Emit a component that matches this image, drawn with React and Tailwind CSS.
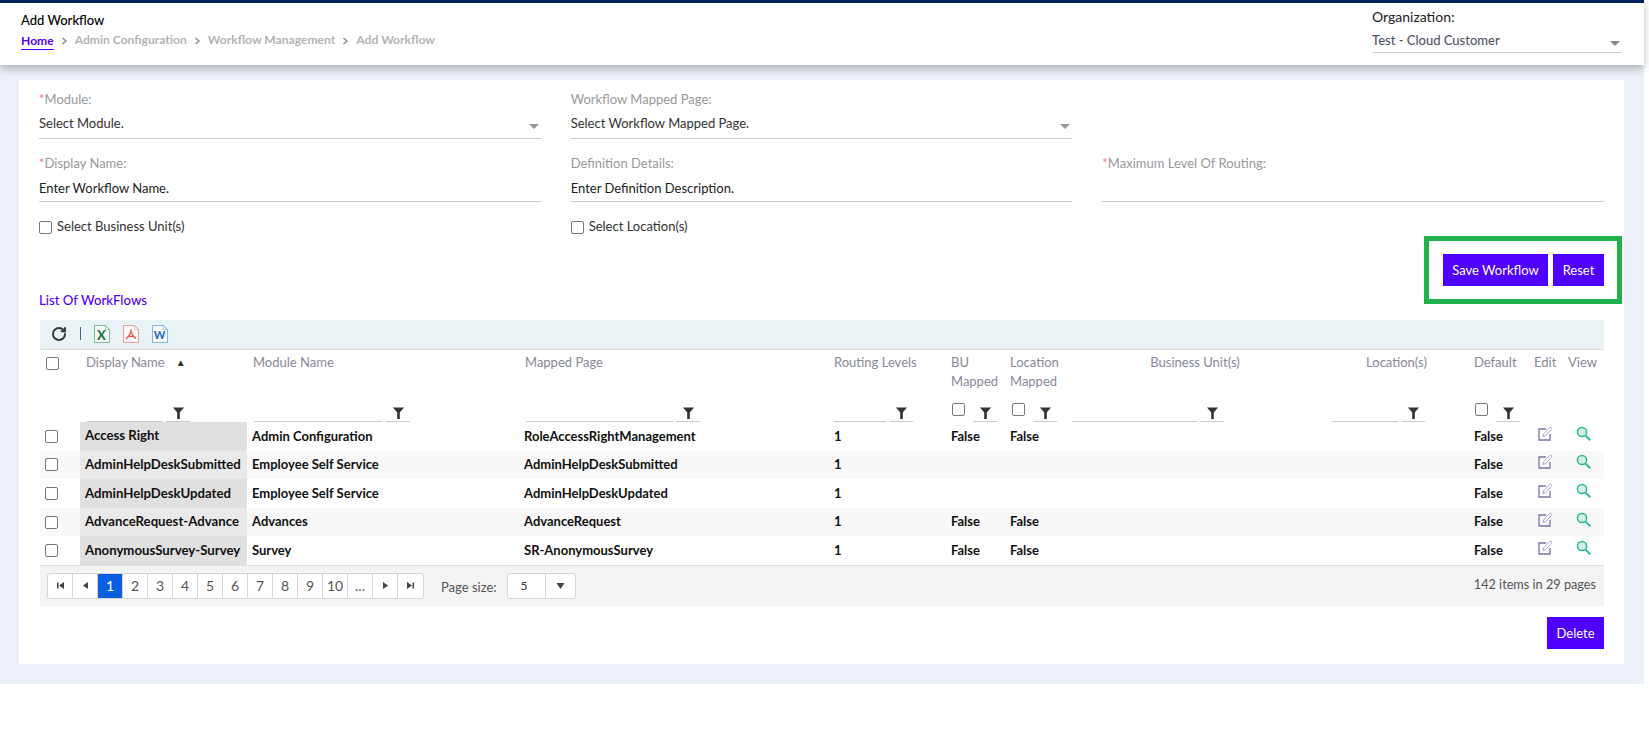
import { RotateCw } from "lucide-react";

const lato = "font-['Lato',sans-serif]";

const rows = [
  { name: "Access Right", mod: "Admin Configuration", page: "RoleAccessRightManagement", bu: "False", loc: "False" },
  { name: "AdminHelpDeskSubmitted", mod: "Employee Self Service", page: "AdminHelpDeskSubmitted", bu: "", loc: "" },
  { name: "AdminHelpDeskUpdated", mod: "Employee Self Service", page: "AdminHelpDeskUpdated", bu: "", loc: "" },
  { name: "AdvanceRequest-Advance", mod: "Advances", page: "AdvanceRequest", bu: "False", loc: "False" },
  { name: "AnonymousSurvey-Survey", mod: "Survey", page: "SR-AnonymousSurvey", bu: "False", loc: "False" },
];

const pages = ["1", "2", "3", "4", "5", "6", "7", "8", "9", "10", "..."];

function Caret() {
  return <span className="w-0 h-0 border-x-[5px] border-x-transparent border-t-[5px] border-t-[#999999] self-end mb-[5px] mr-[2px]"></span>;
}

function Box({ className = "" }) {
  return <span className={"block w-[13px] h-[13px] rounded-[2px] border border-[#767676] bg-white " + className}></span>;
}

function Chevron() {
  return (
    <svg width="7" height="8" viewBox="0 0 7 8" fill="none" className="mx-[7px] mt-[2px]">
      <path d="M1.5 1l3.5 3-3.5 3" stroke="#8f8f8f" strokeWidth="1.5" />
    </svg>
  );
}

function Funnel() {
  return (
    <svg width="11" height="12" viewBox="0 0 11 12">
      <path d="M0 .5h11L6.8 5.5v6.5H4.2V5.5z" fill="#333333" />
    </svg>
  );
}

function FilterBtn() {
  return (
    <div className="w-[24px] h-full border-b border-[#cccccc] flex justify-center items-end pb-[2px]">
      <Funnel />
    </div>
  );
}

// input underline + funnel button used in the header filter row
function Filter({ w }) {
  return (
    <div className="flex items-end gap-[3px] h-[21px]">
      <div className="h-full border-b border-[#cccccc]" style={{ width: w }}></div>
      <FilterBtn />
    </div>
  );
}

function CheckFilter({ gap }) {
  return (
    <div className="flex items-end h-[21px]">
      <Box className="mb-[6px]" />
      <div style={{ width: gap }}></div>
      <FilterBtn />
    </div>
  );
}

function EditIcon() {
  return (
    <svg width="15" height="15" viewBox="0 0 15 15" fill="none" className="block">
      <path d="M8 3H1v11h11V8" stroke="#7574ab" strokeWidth="1.3" />
      <path d="M5 10.5l.8-2.8L11.6 1.6c.5-.5 1.3-.5 1.8 0s.5 1.3 0 1.8L7.6 9.6z" stroke="#a5a4c9" fill="white" />
    </svg>
  );
}

function ViewIcon() {
  return (
    <svg width="15" height="15" viewBox="0 0 15 15" fill="none" className="block">
      <circle cx="6" cy="6" r="4.6" stroke="#2bb893" strokeWidth="1.5" fill="#d5efe6" />
      <path d="M9.6 9.6l4.6 4.6" stroke="#2bb893" strokeWidth="2" />
    </svg>
  );
}

function FileIcon({ color, children }) {
  return (
    <svg width="16" height="18" viewBox="0 0 16 18" fill="none">
      <path d="M.5.5h11l4 4v13H.5z" stroke={color} strokeOpacity="0.55" fill="#f7fafb" />
      <path d="M11.5.5v4h4" stroke={color} strokeOpacity="0.35" />
      {children}
    </svg>
  );
}

function PagerBtn({ children, active }) {
  return (
    <div className={"w-[25px] h-full flex items-center justify-center border-r border-[#d5d5d5] last:border-r-0 text-[14px] " + (active ? "bg-[#0b5ee0] text-white" : "text-[#555555]")}>
      {children}
    </div>
  );
}

function Tri({ d }) {
  return (
    <svg width="9" height="9" viewBox="0 0 9 9">
      <path d={d} fill="#444444" />
    </svg>
  );
}

export default function App() {
  return (
    <div className={"w-full h-[745px] bg-white overflow-hidden text-[13px] " + lato}>
      <div className="w-[1644px]">
        <div className="relative z-10 h-[65px] bg-white border-t-[3px] border-[#00205b] shadow-[0_4px_8px_rgba(0,0,0,0.25)] flex justify-between pl-[21px] pr-[22px]">
          <div>
            <div className="mt-[7px] h-5 leading-5 text-black font-medium">Add Workflow</div>
            <div className="flex items-center h-5 leading-5 font-bold text-[#b3b3b3] text-[12.1px]">
              <span className="text-[#5500ff] border-b border-[#5500ff] h-[19px]">Home</span>
              <Chevron />
              <span>Admin Configuration</span>
              <Chevron />
              <span>Workflow Management</span>
              <Chevron />
              <span>Add Workflow</span>
            </div>
          </div>
          <div className="w-[250px]">
            <div className="mt-[4px] h-5 leading-5 text-[14px] text-[#222222]">Organization:</div>
            <div className="mt-[1px] h-[25px] border-b border-[#cccccc] flex items-center justify-between text-[#555566] font-medium pt-[2px]">
              <span>Test - Cloud Customer</span>
              <span className="w-0 h-0 border-x-[5px] border-x-transparent border-t-[5px] border-t-[#888888] mt-[5px] mr-[2px]"></span>
            </div>
          </div>
        </div>

        <div className="bg-[#ecf0f8] pl-[19px] pr-5 pt-[15px] pb-5">
          <div className="relative bg-white h-[584px] pl-5 pr-5 pt-[9px]">
            <div className="grid grid-cols-3 gap-x-[30px] text-[#333333]">
              <div>
                <div className="h-5 leading-5 text-[#999999]"><span className="text-[#f08080]">*</span>Module:</div>
                <div className="mt-[5px] h-[25px] border-b border-[#cccccc] flex justify-between items-center pb-1">
                  <span>Select Module.</span>
                  <Caret />
                </div>
              </div>
              <div>
                <div className="h-5 leading-5 text-[#999999]">Workflow Mapped Page:</div>
                <div className="mt-[5px] h-[25px] border-b border-[#cccccc] flex justify-between items-center pb-1">
                  <span>Select Workflow Mapped Page.</span>
                  <Caret />
                </div>
              </div>
              <div></div>

              <div className="mt-[14px]">
                <div className="h-5 leading-5 text-[#999999]"><span className="text-[#f08080]">*</span>Display Name:</div>
                <div className="mt-[5px] h-[24px] border-b border-[#cccccc] flex items-center pb-[2px] text-[#222222]">Enter Workflow Name.</div>
              </div>
              <div className="mt-[14px]">
                <div className="h-5 leading-5 text-[#999999]">Definition Details:</div>
                <div className="mt-[5px] h-[24px] border-b border-[#cccccc] flex items-center pb-[2px] text-[#222222]">Enter Definition Description.</div>
              </div>
              <div className="mt-[14px]">
                <div className="h-5 leading-5 text-[#999999]"><span className="text-[#f08080]">*</span>Maximum Level Of Routing:</div>
                <div className="mt-[5px] h-[24px] border-b border-[#cccccc]"></div>
              </div>

              <div className="mt-[15px] h-5 flex items-center gap-[5px]">
                <Box />
                <span>Select Business Unit(s)</span>
              </div>
              <div className="mt-[15px] h-5 flex items-center gap-[5px]">
                <Box />
                <span>Select Location(s)</span>
              </div>
            </div>

            <div className="mt-[17px] flex justify-end gap-[5px] text-white">
              <button className="w-[105px] h-8 pt-px bg-[#4f00ff]">Save Workflow</button>
              <button className="w-[51px] h-8 pt-px bg-[#4f00ff]">Reset</button>
            </div>

            <div className="mt-1 h-5 leading-5 font-medium text-[13.2px] text-[#5500ff]">List Of WorkFlows</div>

            <div className="mt-[10px] ml-px h-[30px] bg-[#e9f2f5] border-b border-[#dddddd] flex items-center pb-[2px]">
              <RotateCw size={16} strokeWidth={3} color="#3a3a3a" className="ml-[11px]" />
              <div className="ml-[13px] w-px h-[13px] bg-[#5a5a8a]"></div>
              <div className="ml-[13px] flex gap-[13px]">
                <FileIcon color="#1f8a4c">
                  <text x="7.5" y="14.5" textAnchor="middle" fontSize="13" fontWeight="900" fill="#1f7a44" fontFamily="Lato">X</text>
                </FileIcon>
                <FileIcon color="#e2574c">
                  <path d="M8 4.5c0 3-2 7-5 9.5M8 4.5c0 3 2 7 5 9M4 12c3-1 6-1 9 .5" stroke="#e2574c" strokeWidth="1.3" />
                </FileIcon>
                <FileIcon color="#2b7cd3">
                  <text x="7.5" y="14" textAnchor="middle" fontSize="11" fontWeight="900" fill="#2b6cb8" fontFamily="Lato">W</text>
                </FileIcon>
              </div>
            </div>

            <table className="ml-px w-[1564px] table-fixed border-collapse">
              <colgroup>
                <col className="w-[40px]" />
                <col className="w-[167px]" />
                <col className="w-[272px]" />
                <col className="w-[309px]" />
                <col className="w-[117px]" />
                <col className="w-[60px]" />
                <col className="w-[62px]" />
                <col className="w-[260px]" />
                <col className="w-[143px]" />
                <col className="w-[60px]" />
                <col className="w-[32px]" />
                <col className="w-[42px]" />
              </colgroup>
              <thead className="text-[#888899] font-normal">
                <tr className="h-[51px] align-top leading-[19px]">
                  <th className="pt-[7px] pl-[6px]"><Box /></th>
                  <th className="pt-[3px] pl-[6px] text-left font-normal">
                    Display Name<span className="ml-[11px] text-[10px] text-[#333333] align-[1px]">▲</span>
                  </th>
                  <th className="pt-[3px] pl-[6px] text-left font-normal">Module Name</th>
                  <th className="pt-[3px] pl-[6px] text-left font-normal">Mapped Page</th>
                  <th className="pt-[3px] pl-[6px] text-left font-normal">Routing Levels</th>
                  <th className="pt-[3px] pl-[6px] text-left font-normal">BU Mapped</th>
                  <th className="pt-[3px] pl-[5px] text-left font-normal">Location Mapped</th>
                  <th className="pt-[3px] pr-[4px] text-center font-normal">Business Unit(s)</th>
                  <th className="pt-[3px] pr-[4px] text-center font-normal">Location(s)</th>
                  <th className="pt-[3px] pl-[4px] text-left font-normal">Default</th>
                  <th className="pt-[3px] pl-[4px] text-left font-normal">Edit</th>
                  <th className="pt-[3px] pl-[6px] text-left font-normal">View</th>
                </tr>
                <tr className="h-[21px]">
                  <th></th>
                  <th className="p-0 pl-[7px]"><Filter w={76} /></th>
                  <th className="p-0 pl-[7px]"><Filter w={129} /></th>
                  <th className="p-0 pl-[7px]"><Filter w={147} /></th>
                  <th className="p-0 pl-[6px]"><Filter w={52} /></th>
                  <th className="p-0 pl-[7px]"><CheckFilter gap={8} /></th>
                  <th className="p-0 pl-[7px]"><CheckFilter gap={8} /></th>
                  <th className="p-0 pl-[5px]"><Filter w={125} /></th>
                  <th className="p-0 pl-[5px]"><Filter w={66} /></th>
                  <th className="p-0 pl-[5px]"><CheckFilter gap={8} /></th>
                  <th></th>
                  <th></th>
                </tr>
              </thead>
              <tbody className="font-bold text-[#111111]">
                {rows.map((r, i) => (
                  <tr key={r.name} className={"h-[28.6px] " + (i % 2 ? "bg-[#f8f8f8]" : "bg-white")}>
                    <td className="pl-[5px]"><Box /></td>
                    <td className={"pl-[5px] whitespace-nowrap text-[13.2px] " + (i % 2 ? "bg-[#e9e9e9]" : "bg-[#e0e0e0]")}>{r.name}</td>
                    <td className="pl-[5px]">{r.mod}</td>
                    <td className="pl-[5px]">{r.page}</td>
                    <td className="pl-[6px]">1</td>
                    <td className="pl-[6px]">{r.bu}</td>
                    <td className="pl-[5px]">{r.loc}</td>
                    <td></td>
                    <td></td>
                    <td className="pl-[4px]">False</td>
                    <td className="pl-[8px] pb-[6px]"><EditIcon /></td>
                    <td className="pl-[14px] pb-[6px]"><ViewIcon /></td>
                  </tr>
                ))}
              </tbody>
            </table>

            <div className="ml-px w-[1564px] h-[41px] bg-[#f4f4f4] border-t border-[#dddddd] flex items-center pl-[7px] pr-2 text-[#555555]">
              <div className="h-[26px] flex bg-white border border-[#d5d5d5] rounded-[3px] overflow-hidden">
                <PagerBtn><Tri d="M1 1.5h1.5v6H1zM8 1v7L3 4.5z" /></PagerBtn>
                <PagerBtn><Tri d="M7 1v7L2 4.5z" /></PagerBtn>
                {pages.map((p, i) => (
                  <PagerBtn key={p} active={i === 0}>{p}</PagerBtn>
                ))}
                <PagerBtn><Tri d="M2 1v7l5-3.5z" /></PagerBtn>
                <PagerBtn><Tri d="M1 1v7l5-3.5zM6.5 1.5H8v6H6.5z" /></PagerBtn>
              </div>
              <span className="ml-[17px] mt-1">Page size:</span>
              <div className="ml-[10px] w-[69px] h-[26px] bg-white border border-[#d5d5d5] rounded-[3px] flex items-center">
                <span className="w-[37px] pl-[13px] text-[12px] text-[#333333]">5</span>
                <div className="h-full flex-1 border-l border-[#d5d5d5] flex items-center justify-center">
                  <Tri d="M0.5 2h8L4.5 8z" />
                </div>
              </div>
              <span className="ml-auto mb-[3px] text-[12.7px]">142 items in 29 pages</span>
            </div>

            <div className="mt-[11px] flex justify-end">
              <button className="w-[57px] h-8 pt-px bg-[#4f00ff] text-white">Delete</button>
            </div>

            {/* annotation box drawn over the buttons */}
            <div className="absolute left-[1405px] top-[156px] w-[198px] h-[68px] border-[5px] border-[#22b14c]"></div>
          </div>
        </div>
      </div>
    </div>
  );
}
